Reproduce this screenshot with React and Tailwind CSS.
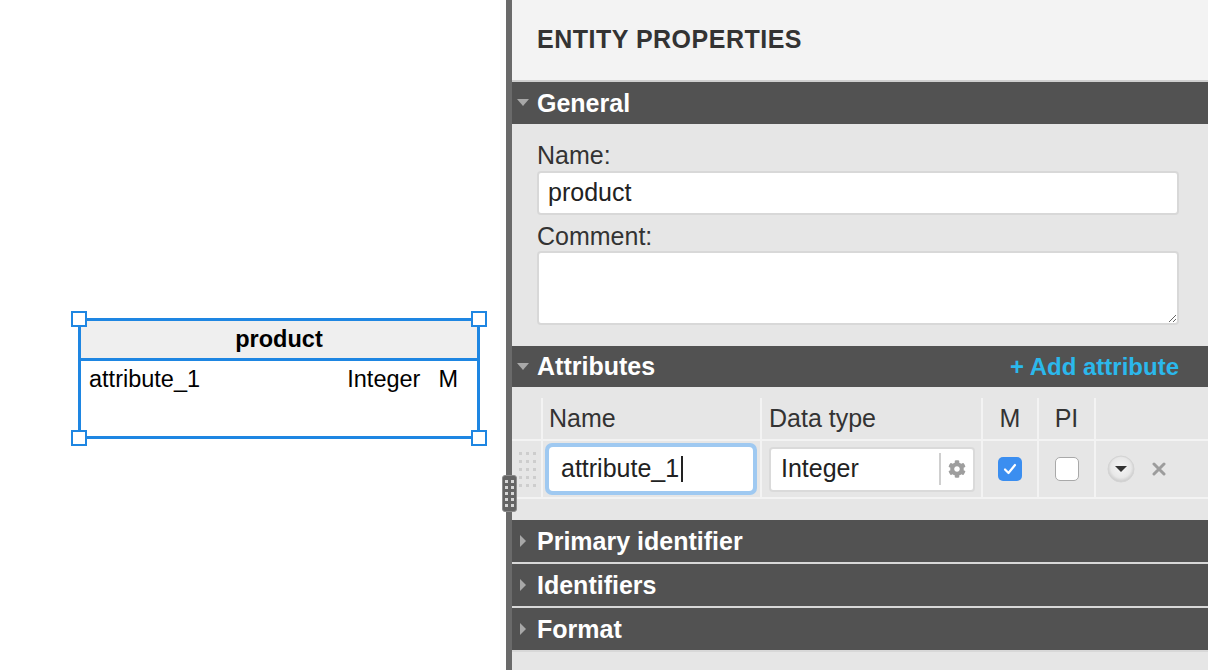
import { FaCog } from "react-icons/fa";

function Tri({ open }) {
  return open ? (
    <svg width="12" height="8" viewBox="0 0 12 8" className="shrink-0">
      <polygon points="0,0 12,0 6,7" fill="#a8a8a8" />
    </svg>
  ) : (
    <svg width="12" height="12" viewBox="0 0 12 12" className="shrink-0">
      <polygon points="3,0 9,6 3,12" fill="#a8a8a8" />
    </svg>
  );
}

function SectionBar({ title, open, right, className = "" }) {
  return (
    <div className={`flex items-center bg-[#525252] pl-[5px] pr-[29px] ${className}`}>
      <Tri open={open} />
      <span className="ml-[8px] text-[25px] font-bold leading-none text-white">{title}</span>
      {right}
    </div>
  );
}

function Handle({ pos }) {
  return <div className={`absolute h-[16px] w-[16px] border-2 border-[#1e86e2] bg-white ${pos}`} />;
}

function Dots({ cols, rows, className, gap }) {
  return (
    <div className={`grid ${gap}`} style={{ gridTemplateColumns: `repeat(${cols}, 3px)` }}>
      {Array.from({ length: cols * rows }).map((_, i) => (
        <span key={i} className={`h-[3px] w-[3px] ${className}`} />
      ))}
    </div>
  );
}

export default function App() {
  return (
    <div className="relative flex h-[670px] w-[1208px] overflow-hidden font-['Liberation_Sans',Arial,sans-serif]">
      {/* diagram canvas */}
      <div className="relative w-[506px] shrink-0 bg-white">
        <div className="absolute left-[78px] top-[318px] h-[121px] w-[402px] border-[3px] border-[#1e86e2]">
          <div className="flex h-[40px] items-center justify-center border-b-[3px] border-[#1e86e2] bg-[#efefef] text-[23.5px] font-bold text-black">
            product
          </div>
          <div className="flex pl-[8px] pr-[19px] pt-[4px] text-[23.5px] leading-[28px] text-black">
            <span>attribute_1</span>
            <span className="ml-auto">Integer</span>
            <span className="ml-[18px]">M</span>
          </div>
          <Handle pos="-left-[10px] -top-[10px]" />
          <Handle pos="-right-[10px] -top-[10px]" />
          <Handle pos="-left-[10px] -bottom-[10px]" />
          <Handle pos="-right-[10px] -bottom-[10px]" />
        </div>
      </div>

      {/* splitter */}
      <div className="w-[6px] shrink-0 bg-[#6a6a6a]" />

      {/* properties panel */}
      <div className="flex min-w-0 flex-1 flex-col bg-[#e6e6e6]">
        <div className="flex h-[82px] items-center border-b-2 border-[#cfcfcf] bg-[#f3f3f3] pl-[25px]">
          <h1 className="text-[25px] font-bold tracking-[0.5px] text-[#333]">ENTITY PROPERTIES</h1>
        </div>

        <SectionBar title="General" open className="h-[42px]" />
        <div className="px-[29px] pb-[21px] pl-[25px] pt-[16px] text-[25px] text-[#333]">
          <div className="h-[30px] leading-[30px]">Name:</div>
          <div className="mt-[1px] flex h-[44px] items-center rounded-[4px] border-2 border-[#d8d8d8] bg-white pl-[9px] text-[#222]">
            product
          </div>
          <div className="mt-[6px] h-[30px] leading-[30px]">Comment:</div>
          <textarea
            readOnly
            className="block h-[74px] w-full rounded-[4px] border-2 border-[#d8d8d8] bg-white outline-none"
          />
        </div>

        <SectionBar
          title="Attributes"
          open
          className="h-[41px]"
          right={
            <span className="ml-auto text-[24px] font-bold leading-none text-[#2bb8ec]">+ Add attribute</span>
          }
        />

        {/* attribute table */}
        <div className="pt-[11px] text-[25px] text-[#333]">
          <div className="grid grid-cols-[29px_219px_221px_56px_57px_1fr] border-b-2 border-[#f3f3f3]">
            <div className="h-[41px]" />
            <div className="flex h-[41px] items-center border-l-2 border-[#f3f3f3] pl-[6px]">Name</div>
            <div className="flex h-[41px] items-center border-l-2 border-[#f3f3f3] pl-[7px]">Data type</div>
            <div className="flex h-[41px] items-center justify-center border-l-2 border-[#f3f3f3]">M</div>
            <div className="flex h-[41px] items-center justify-center border-l-2 border-[#f3f3f3]">PI</div>
            <div className="h-[41px] border-l-2 border-[#f3f3f3]" />
          </div>
          <div className="grid grid-cols-[29px_219px_221px_56px_57px_1fr] border-b-2 border-[#f3f3f3]">
            <div className="flex h-[56px] items-center justify-center pl-[2px]">
              <Dots cols={3} rows={5} gap="gap-x-[4px] gap-y-[5px]" className="bg-[#cdcdcd]" />
            </div>
            <div className="flex h-[56px] items-center border-l-2 border-[#f3f3f3] pl-[2px] pr-[3px]">
              <div className="h-[52px] w-full rounded-[7px] bg-[#9fc9f1] p-[4px]">
                <div className="flex h-full items-center rounded-[4px] bg-white pl-[12px] text-[#222]">
                  attribute_1
                  <span className="ml-[2px] h-[26px] w-[2px] bg-[#222]" />
                </div>
              </div>
            </div>
            <div className="flex h-[56px] items-center border-l-2 border-[#f3f3f3] pl-[7px]">
              <div className="flex h-[45px] w-[206px] items-center rounded-[4px] border-2 border-[#dadada] bg-white">
                <span className="pl-[10px] text-[#222]">Integer</span>
                <span className="ml-auto h-[32px] w-[2px] bg-[#cfcfcf]" />
                <span className="flex w-[32px] items-center justify-center">
                  <FaCog size={18} color="#9e9e9e" />
                </span>
              </div>
            </div>
            <div className="flex h-[56px] items-center justify-center border-l-2 border-[#f3f3f3]">
              <span className="flex h-[24px] w-[24px] items-center justify-center rounded-[5px] bg-[#3b8ef0]">
                <svg width="14" height="12" viewBox="0 0 14 12">
                  <polyline points="2,6.5 5.5,10 12,2" fill="none" stroke="white" strokeWidth="2.2" strokeLinecap="round" strokeLinejoin="round" />
                </svg>
              </span>
            </div>
            <div className="flex h-[56px] items-center justify-center border-l-2 border-[#f3f3f3]">
              <span className="h-[24px] w-[24px] rounded-[5px] border-[1.5px] border-[#a9a9a9] bg-white" />
            </div>
            <div className="flex h-[56px] items-center border-l-2 border-[#f3f3f3] pl-[11px]">
              <svg width="28" height="28" viewBox="0 0 28 28">
                <defs>
                  <radialGradient id="g" cx="50%" cy="45%" r="55%">
                    <stop offset="0%" stopColor="#f6f6f6" />
                    <stop offset="70%" stopColor="#e8e8e8" />
                    <stop offset="100%" stopColor="#c9c9c9" />
                  </radialGradient>
                </defs>
                <circle cx="14" cy="14" r="13" fill="url(#g)" stroke="#d4d4d4" strokeWidth="1" />
                <polygon points="8,11 20,11 14,17" fill="#333" />
              </svg>
              <svg width="14" height="14" viewBox="0 0 14 14" className="ml-[17px]">
                <path d="M2 2 L12 12 M12 2 L2 12" stroke="#9c9c9c" strokeWidth="3" strokeLinecap="round" />
              </svg>
            </div>
          </div>
        </div>

        <div className="mt-[21px]">
          <SectionBar title="Primary identifier" className="h-[44px] border-b-2 border-[#d8d8d8]" />
          <SectionBar title="Identifiers" className="h-[44px] border-b-2 border-[#d8d8d8]" />
          <SectionBar title="Format" className="h-[44px] border-b-2 border-[#d8d8d8]" />
        </div>
      </div>

      {/* splitter grip */}
      <div className="absolute left-[502px] top-[475px] flex h-[37px] w-[15px] items-center justify-center rounded-[3px] border border-[#8c8c8c] bg-[#646464]">
        <Dots cols={2} rows={5} gap="gap-[3px]" className="bg-[#d6d6d6]" />
      </div>
    </div>
  );
}
